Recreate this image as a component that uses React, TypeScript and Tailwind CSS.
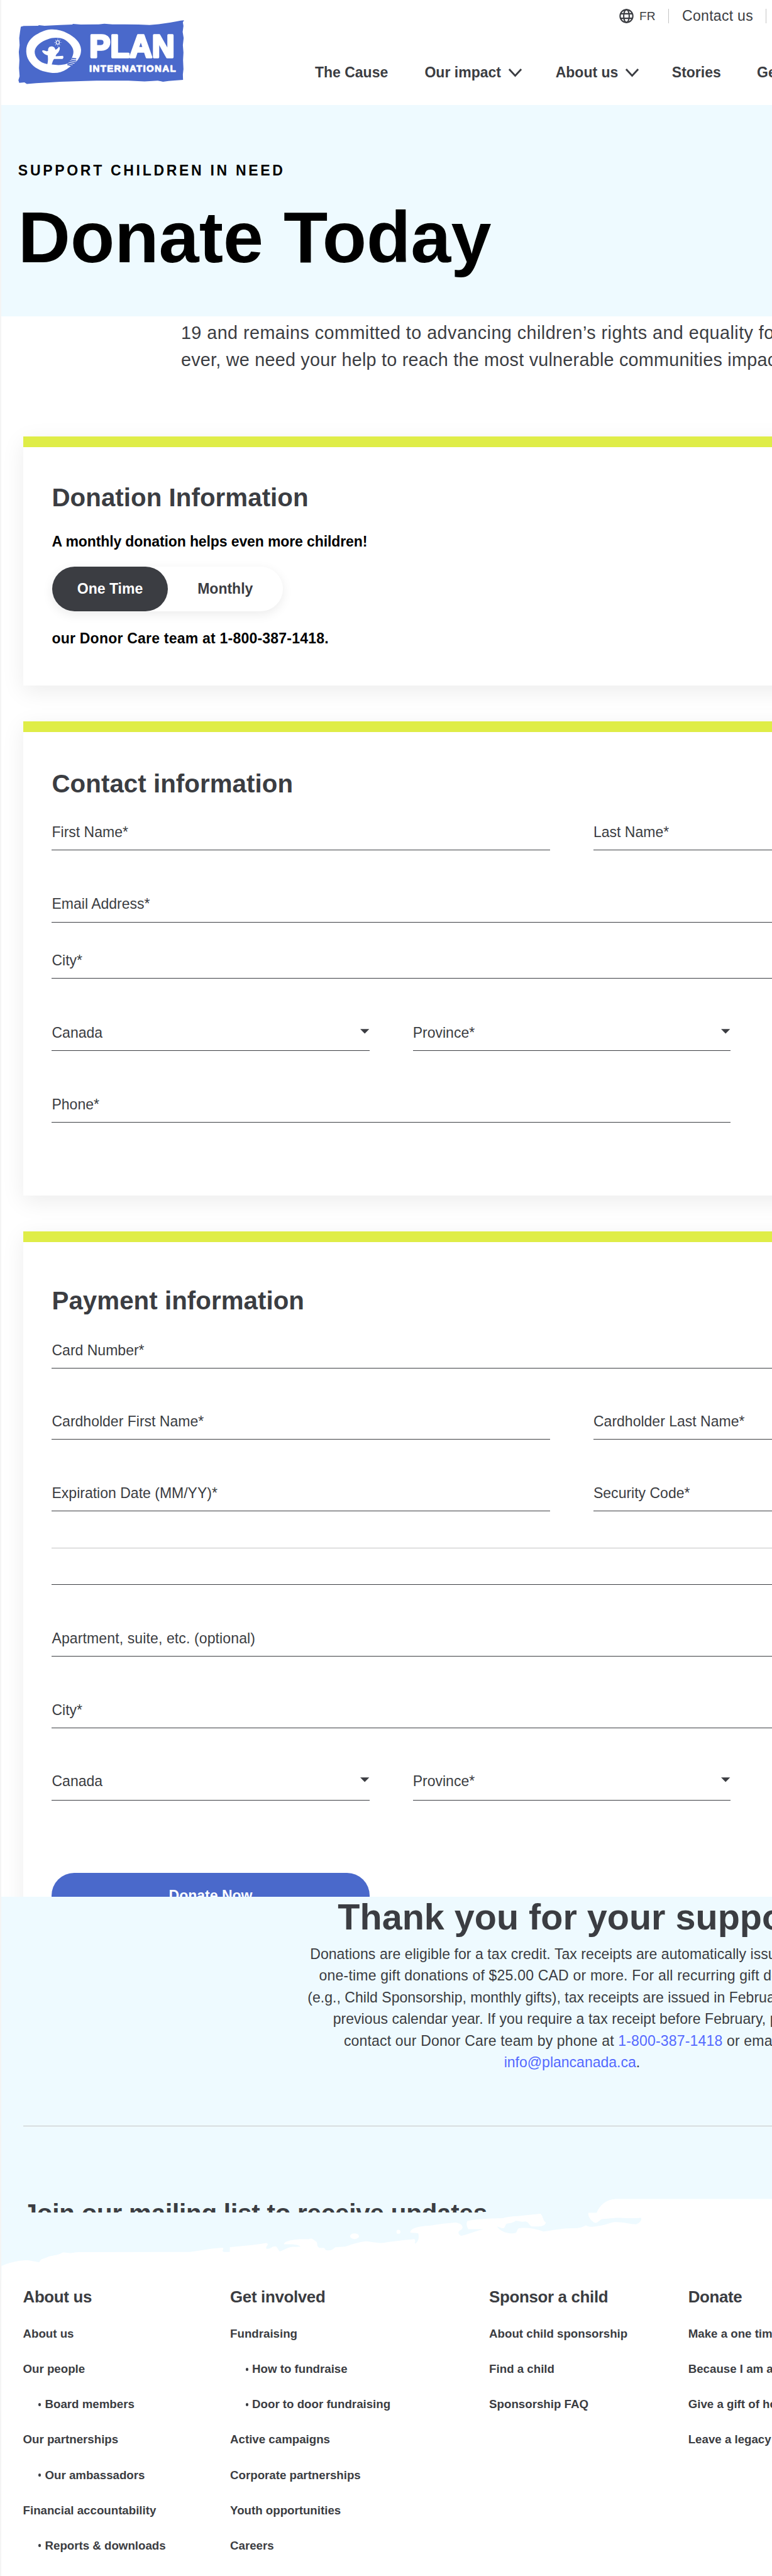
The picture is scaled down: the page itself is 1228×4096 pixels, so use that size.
import React from "react";

const FOOTER = [
  {
    title: "About us",
    width: "w-[343.5px]",
    links: ["About us", "Our people", "- Board members", "Our partnerships", "- Our ambassadors", "Financial accountability", "- Reports & downloads"],
  },
  {
    title: "Get involved",
    width: "w-[429.5px]",
    links: ["Fundraising", "- How to fundraise", "- Door to door fundraising", "Active campaigns", "Corporate partnerships", "Youth opportunities", "Careers"],
  },
  {
    title: "Sponsor a child",
    width: "w-[330px]",
    links: ["About child sponsorship", "Find a child", "Sponsorship FAQ"],
  },
  {
    title: "Donate",
    width: "w-[330px]",
    links: ["Make a one time", "Because I am a", "Give a gift of hope", "Leave a legacy"],
  },
];

function Logo() {
  return (
    <svg viewBox="88 98 832 324" className="block h-[108px] w-[277px]" aria-label="Plan International">
      <path
        fill="#4a69cb"
        d="M104 134 L118 130 L190 129 L194 126 L222 129 L300 125 L360 123 L364 120 L402 123 L492 122 L520 119 L560 122 L622 122 L690 123 L745 125 L790 121 L850 113 L880 107 L900 103 L917 102 L911 112 L914 130 L910 160 L915 190 L911 225 L914 262 L912 300 L914 345 L911 372 L912 398 L880 401 L840 404 L812 408 L786 402 L720 406 L640 402 L560 402 L480 402 L400 405 L300 408 L250 411 L180 415 L134 419 L122 411 L96 413 L92 400 L98 380 L95 340 L97 300 L94 260 L98 225 L96 190 L100 160 Z"
      />
      <path
        fill="#fff"
        fillRule="evenodd"
        d="M131 256 C130 212 158 184 190 168 C215 153 240 147 262 147 C290 148 315 154 335 166 C372 184 402 212 404 248 C404 268 399 280 392 292 C380 312 352 332 334 344 C310 360 285 366 255 363 C215 358 182 346 158 320 C140 300 132 282 131 256 Z M173 258 C173 286 196 312 236 320 C240 306 240 294 238 276 C228 274 216 268 210 256 C212 248 222 252 232 256 L240 254 C238 240 246 231 260 232 C270 234 274 240 276 248 C286 246 290 238 294 233 C302 236 298 252 290 262 C282 270 276 276 278 281 L314 279 C318 286 316 292 312 294 L270 294 C264 300 262 308 258 322 C284 326 312 326 334 318 C352 304 366 280 366 258 C366 236 344 210 318 196 C296 186 262 186 240 196 C206 206 174 232 173 258 Z"
      />
      <g fill="none" stroke="#fff" strokeWidth="4">
        <ellipse cx="288" cy="212" rx="8" ry="9" />
        <path d="M276 200 l3 3 M288 194 v4 M300 199 l-3 4 M272 213 h4 M302 212 h3 M276 226 l3 -4 M288 227 v4 M299 225 l-3 -4" strokeWidth="3" />
      </g>
      <path d="M350 290 l30 4 M344 298 l36 6 M338 306 l38 6 M332 314 l36 6 M336 322 l22 6" stroke="#4a69cb" strokeWidth="6" />
      <g fill="#fff" stroke="#fff" strokeLinejoin="round" fontFamily="Liberation Sans" fontWeight="700">
        <text x="446" y="287" fontSize="156" strokeWidth="11" textLength="424" lengthAdjust="spacingAndGlyphs">PLAN</text>
        <text x="445" y="359" fontSize="47" strokeWidth="3" textLength="431" lengthAdjust="spacing">INTERNATIONAL</text>
      </g>
    </svg>
  );
}

function Chevron({ className }: { className: string }) {
  return (
    <svg viewBox="0 0 24 16" className={className} fill="none" stroke="#3b3d42" strokeWidth="3">
      <path d="M2 2 L12 13 L22 2" />
    </svg>
  );
}

function Globe() {
  return (
    <svg viewBox="0 0 24 24" className="h-[24px] w-[24px]" fill="none" stroke="#3b3d42" strokeWidth="2.2">
      <circle cx="12" cy="12" r="10.6" />
      <ellipse cx="12" cy="12" rx="4.6" ry="10.6" />
      <path d="M2.4 8.2 H21.6 M2.4 15.8 H21.6" />
    </svg>
  );
}

function Field({ label, className, select }: { label: string; className: string; select?: boolean }) {
  return (
    <div className={`flex shrink-0 items-start justify-between border-b border-[#3b3d42] text-[24px] leading-[35px] ${className}`}>
      <span className="whitespace-nowrap">{label}</span>
      {select && (
        <svg viewBox="0 0 16 8" className="mt-[11px] h-[8px] w-[15px]" fill="#3b3d42">
          <path d="M0 0 H16 L8 8 Z" />
        </svg>
      )}
    </div>
  );
}

function Card({ className, children }: { className: string; children: React.ReactNode }) {
  return (
    <section className={`ml-[36.4px] w-[1300px] border-t-[18px] border-[#dfed47] bg-white pl-[47.5px] shadow-[0_9px_36px_rgba(0,0,0,0.08)] ${className}`}>
      {children}
    </section>
  );
}

function CardTitle({ children }: { children: React.ReactNode }) {
  return <h2 className="text-[42px] font-bold leading-[63px] tracking-[0.05px]">{children}</h2>;
}

export default function App() {
  return (
    <div className="h-[4096px] w-[1228px] overflow-hidden bg-white">
      <div className="h-[4271px] w-[1280px] overflow-hidden border-l-[2.1px] border-[#f4f4f4] bg-white font-['Liberation_Sans',Arial,sans-serif] text-[#3b3d42] [zoom:0.959375]">
        <header className="flex h-[174px] w-[1400px]">
          <div className="w-[520px] pl-[27.5px] pt-[32.5px]">
            <Logo />
          </div>
          <div className="flex flex-col">
            <div className="flex h-[54px] items-start pl-[505px] pt-[15px] text-[24px] leading-[24px]">
              <Globe />
              <span className="ml-[9px] w-[48px] text-[20px]">FR</span>
              <div className="h-[24px] w-px bg-[#c4c4c4]" />
              <span className="ml-[22px] w-[139px] tracking-[0.3px]">Contact us</span>
              <div className="h-[24px] w-px bg-[#c4c4c4]" />
            </div>
            <nav className="flex pt-[48px] text-[24px] font-bold leading-[36px]">
              <a className="w-[182px]">The Cause</a>
              <a className="flex w-[217px]">
                Our impact
                <Chevron className="ml-[11px] mt-[11px] h-[16px] w-[24px]" />
              </a>
              <a className="flex w-[193px]">
                About us
                <Chevron className="ml-[11px] mt-[11px] h-[16px] w-[24px]" />
              </a>
              <a className="w-[141px]">Stories</a>
              <a className="whitespace-nowrap">Get involved</a>
            </nav>
          </div>
        </header>

        <div className="h-[350px] bg-[#eefaff] pl-[28px] pt-[91px] text-black">
          <p className="text-[24px] font-bold leading-[36px] tracking-[3.84px]">SUPPORT CHILDREN IN NEED</p>
          <h1 className="mt-[33px] text-[120px] font-bold leading-[120px]">Donate Today</h1>
        </div>

        <main className="h-[2620px] w-[1400px] overflow-hidden">
          <p className="whitespace-nowrap pl-[298px] pt-[5px] text-[30px] leading-[45px]">
            <span className="tracking-[0.46px]">19 and remains committed to advancing children’s rights and equality for</span>
            <br />
            <span className="tracking-[0.25px]">ever, we need your help to reach the most vulnerable communities impacted</span>
          </p>

          <Card className="mt-[104px] h-[413px] pt-[54px]">
            <CardTitle>Donation Information</CardTitle>
            <p className="mt-[22px] text-[24px] font-bold leading-[36px] tracking-[-0.12px] text-black">A monthly donation helps even more children!</p>
            <div className="ml-px mt-[23px] flex h-[75px] w-[382px] rounded-full text-center text-[24px] font-bold leading-[75px] shadow-[0_5px_18px_rgba(0,0,0,0.08)]">
              <div className="w-[191px] rounded-full bg-[#3b3d42] text-white">One Time</div>
              <div className="w-[191px]">Monthly</div>
            </div>
            <p className="mt-[27px] text-[24px] font-bold leading-[36px] tracking-[0.22px] text-black">our Donor Care team at 1-800-387-1418.</p>
          </Card>

          <Card className="mt-[60px] h-[785px] pt-[55px]">
            <CardTitle>Contact information</CardTitle>
            <div className="mt-[31px] flex gap-[72px]">
              <Field label="First Name*" className="h-[47px] w-[826px]" />
              <Field label="Last Name*" className="h-[47px] w-[826px]" />
            </div>
            <Field label="Email Address*" className="mt-[72px] h-[47px]" />
            <Field label="City*" className="mt-[46px] h-[47px]" />
            <div className="mt-[73px] flex gap-[72px]">
              <Field label="Canada" select className="h-[47px] w-[526.5px]" />
              <Field label="Province*" select className="h-[47px] w-[526.5px]" />
            </div>
            <Field label="Phone*" className="mt-[72px] h-[47px] w-[1125px]" />
          </Card>

          <Card className="mt-[60px] h-[1300px] pt-[67px]">
            <CardTitle>Payment information</CardTitle>
            <Field label="Card Number*" className="mt-[32.5px] h-[47px]" />
            <div className="mt-[71px] flex gap-[72px]">
              <Field label="Cardholder First Name*" className="h-[47px] w-[826px]" />
              <Field label="Cardholder Last Name*" className="h-[47px] w-[826px]" />
            </div>
            <div className="mt-[72px] flex gap-[72px]">
              <Field label="Expiration Date (MM/YY)*" className="h-[47px] w-[826px]" />
              <Field label="Security Code*" className="h-[47px] w-[826px]" />
            </div>
            <div className="mt-[60px] border-b border-[#c4c4c4]" />
            <div className="mt-[60px] border-b border-[#3b3d42]" />
            <Field label="Apartment, suite, etc. (optional)" className="mt-[71px] h-[47px] tracking-[0.12px]" />
            <Field label="City*" className="mt-[72px] h-[47px]" />
            <div className="mt-[71px] flex gap-[72px]">
              <Field label="Canada" select className="h-[49px] w-[526.5px]" />
              <Field label="Province*" select className="h-[49px] w-[526.5px]" />
            </div>
            <button className="mt-[120px] block h-[75px] w-[526.5px] rounded-full bg-[#4a69cb] text-[24px] font-bold leading-[74px] text-white">
              Donate Now
            </button>
          </Card>
        </main>

        <section className="relative h-[636px] overflow-hidden whitespace-nowrap bg-[#eefaff]">
          <h2 className="pl-[558px] text-[60px] font-bold leading-[68px]">Thank you for your support</h2>
          <div className="mt-[8.5px] text-[24px] leading-[36px]">
            <p className="pl-[512px] tracking-[0.07px]">Donations are eligible for a tax credit. Tax receipts are automatically issued</p>
            <p className="pl-[527px] tracking-[0.2px]">one-time gift donations of $25.00 CAD or more. For all recurring gift donations</p>
            <p className="pl-[508px] tracking-[0.02px]">(e.g., Child Sponsorship, monthly gifts), tax receipts are issued in February</p>
            <p className="pl-[550px] tracking-[0.05px]">previous calendar year. If you require a tax receipt before February, please</p>
            <p className="pl-[568px] tracking-[0.17px]">
              contact our Donor Care team by phone at <a className="text-[#5469ff]">1-800-387-1418</a> or email
            </p>
            <p className="pl-[833.5px]">
              <a className="text-[#5469ff]">info@plancanada.ca</a>.
            </p>
          </div>
          <div className="ml-[36.4px] mt-[86.5px] border-b border-[#c4c4c4]" />
          <h3 className="mt-[113.5px] h-[30px] overflow-hidden pl-[36px] text-[42px] font-bold leading-[63px] tracking-[-0.18px]">
            Join our mailing list to receive updates
          </h3>
          <svg viewBox="0 0 1568 660" preserveAspectRatio="none" className="absolute -left-[2px] bottom-0 h-[220px] w-[1282px]" fill="#fff">
            <path d="M3 588 C15 575 35 560 55 560 C68 562 78 572 80 568 C82 550 92 552 98 542 C112 532 118 535 126 522 C134 518 138 526 146 523 C152 520 156 519 165 519 L385 518 C410 510 430 500 452 497 C455 505 448 512 454 518 L466 518 L466 495 C490 488 520 484 540 474 C548 480 538 488 540 502 C548 508 552 485 560 492 C564 500 565 515 568 516 C578 505 588 490 598 493 L610 492 C602 478 590 480 576 480 C576 462 600 455 612 455 L626 455 C634 445 636 460 642 468 C645 480 641 488 648 498 C655 500 658 494 660 508 C670 515 674 508 680 495 L700 492 C720 475 730 468 742 465 C760 470 768 475 778 473 C795 464 820 460 840 454 C844 462 840 475 842 477 C850 465 850 440 848 425 L832 422 C832 400 850 390 870 388 C890 380 910 374 925 372 C940 380 940 400 935 408 C928 415 928 430 935 438 C945 435 960 418 980 405 L950 405 C945 390 946 370 948 364 C970 352 1000 352 1020 350 C1035 338 1050 342 1065 336 L1096 328 C1102 340 1100 360 1107 372 C1105 392 1095 393 1078 391 C1070 380 1074 372 1066 367 C1055 372 1050 360 1045 364 C1040 375 1030 375 1027 378 C1022 395 1025 400 1018 400 L1008 392 C1012 410 1025 427 1038 426 C1052 425 1045 415 1052 400 C1070 396 1085 400 1102 417 C1120 410 1140 400 1160 400 C1170 402 1180 398 1188 386 C1195 395 1200 395 1210 390 C1225 388 1235 375 1245 370 C1265 368 1275 380 1290 381 C1300 372 1302 355 1300 349 C1280 352 1265 350 1250 349 L1220 355 C1214 365 1212 374 1207 374 C1198 365 1192 340 1193 324 L1210 324 C1215 290 1228 258 1248 255 L1568 255 V660 H3 Z" />
            <ellipse cx="719" cy="440" rx="9" ry="14" />
            <ellipse cx="808" cy="418" rx="4" ry="10" />
          </svg>
        </section>

        <footer className="flex h-[491px] w-[1500px] whitespace-nowrap pl-[36px] pt-[9px] font-bold">
          {FOOTER.map((col) => (
            <div key={col.title} className={`shrink-0 ${col.width}`}>
              <h4 className="text-[27px] leading-[36px] tracking-[-0.35px]">{col.title}</h4>
              <ul className="mt-[14px] text-[19.5px] leading-[58.5px]">
                {col.links.map((link) =>
                  link.startsWith("- ") ? (
                    <li key={link} className="flex items-center pl-[26px]">
                      <span className="mr-[6.5px] h-[5px] w-[4px] rounded-full bg-[#3b3d42]" />
                      {link.slice(2)}
                    </li>
                  ) : (
                    <li key={link}>{link}</li>
                  ),
                )}
              </ul>
            </div>
          ))}
        </footer>
      </div>
    </div>
  );
}
